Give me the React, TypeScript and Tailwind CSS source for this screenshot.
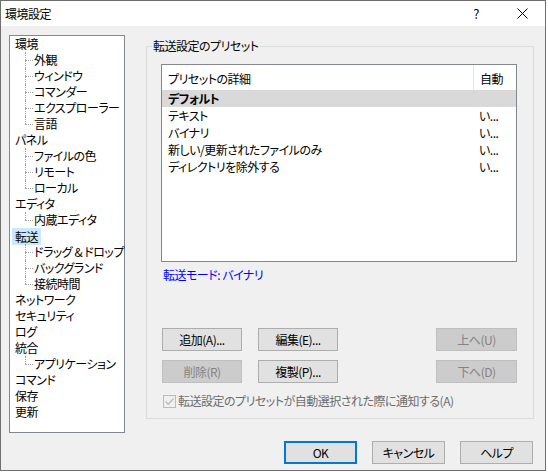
import React from "react"

type Node = { label: string; children?: string[]; selected?: boolean }

const tree: Node[] = [
  { label: "環境", children: ["外観", "ウィンドウ", "コマンダー", "エクスプローラー", "言語"] },
  { label: "パネル", children: ["ファイルの色", "リモート", "ローカル"] },
  { label: "エディタ", children: ["内蔵エディタ"] },
  { label: "転送", selected: true, children: ["ドラッグ & ドロップ", "バックグランド", "接続時間"] },
  { label: "ネットワーク" },
  { label: "セキュリティ" },
  { label: "ログ" },
  { label: "統合", children: ["アプリケーション"] },
  { label: "コマンド" },
  { label: "保存" },
  { label: "更新" },
]

const presets = [
  { name: "デフォルト", auto: "", selected: true },
  { name: "テキスト", auto: "い..." },
  { name: "バイナリ", auto: "い..." },
  { name: "新しい/更新されたファイルのみ", auto: "い..." },
  { name: "ディレクトリを除外する", auto: "い..." },
]

function TreeChild({ label, last }: { label: string; last: boolean }) {
  return (
    <div className="flex h-[16px] items-center pl-[10px]">
      <span className="relative h-[16px] w-[8px] shrink-0">
        <span
          className={`absolute left-0 top-0 border-l border-dotted border-[#a0a0a0] ${last ? "h-[8px]" : "h-[16px]"}`}
        />
        <span className="absolute left-0 top-[8px] w-[8px] border-t border-dotted border-[#a0a0a0]" />
      </span>
      <span className="ml-[1px] whitespace-nowrap">{label}</span>
    </div>
  )
}

function Btn({
  children,
  disabled,
  w = "w-[80px]",
  primary,
}: {
  children: React.ReactNode
  disabled?: boolean
  w?: string
  primary?: boolean
}) {
  const look = disabled
    ? "bg-[#cccccc] border border-[#bfbfbf] text-[#838383]"
    : primary
      ? "bg-[#e1e1e1] border-2 border-[#0078d7] text-black"
      : "bg-[#e1e1e1] border border-[#adadad] text-black"
  return (
    <div className={`${w} h-[23px] flex items-center justify-center whitespace-nowrap ${look}`}>
      {children}
    </div>
  )
}

export default function App() {
  return (
    <div className="w-[548px] h-[472px] bg-white text-[12px] leading-[16px] tracking-[-0.5px] text-black font-['Noto_Sans_CJK_JP','Noto_Sans',sans-serif] [font-feature-settings:'palt']">
      <div className="w-[546px] h-[471px] border border-[#6f6f6f] flex flex-col bg-[#f0f0f0]">
        {/* title bar */}
        <div className="h-[25px] bg-white flex items-center shrink-0">
          <span className="ml-[4px]">環境設定</span>
          <div className="ml-auto flex h-full">
            <div className="w-[46px] h-full flex items-center justify-center text-[13px]">?</div>
            <div className="w-[46px] h-full flex items-center justify-center">
              <svg width="11" height="11" viewBox="0 0 11 11">
                <path d="M0.5 0.5 L10.5 10.5 M10.5 0.5 L0.5 10.5" stroke="#000" strokeWidth="1" fill="none" />
              </svg>
            </div>
          </div>
        </div>

        <div className="flex pl-[8px] pt-[9px]">
          {/* tree */}
          <div className="w-[116px] h-[398px] border border-[#828790] bg-white pl-[5px] shrink-0">
            {tree.map((n) => (
              <div key={n.label}>
                <div className="flex h-[16px] items-center">
                  <span className={n.selected ? "-ml-[3px] px-[3px] bg-[#cce8ff] leading-[17px]" : ""}>
                    {n.label}
                  </span>
                </div>
                {n.children?.map((c, i) => (
                  <TreeChild key={c} label={c} last={i === n.children!.length - 1} />
                ))}
              </div>
            ))}
          </div>

          {/* group box */}
          <div className="relative ml-[21px] mt-[11px] w-[388px] h-[373px] border border-[#dcdcdc] pl-[14px] pt-[17px]">
            <span className="absolute -top-[9px] left-[5px] px-[1px] bg-[#f0f0f0]">転送設定のプリセット</span>

            <div className="w-[356px] h-[198px] border border-[#828790] bg-white">
              <div className="flex h-[25px]">
                <div className="w-[311px] pl-[6px] pt-[6px] whitespace-nowrap">プリセットの詳細</div>
                <div className="border-l border-[#e5e5e5] pl-[6px] pt-[6px]">自動</div>
              </div>
              {presets.map((p) => (
                <div
                  key={p.name}
                  className={`flex h-[17px] items-center ${p.selected ? "bg-[#d9d9d9] font-bold" : ""}`}
                >
                  <div className="w-[311px] pl-[6px] whitespace-nowrap">{p.name}</div>
                  <div className="pl-[6px] font-normal">{p.auto}</div>
                </div>
              ))}
            </div>

            <div className="mt-[5px] ml-[2px] text-[#0000ff]">転送モード: バイナリ</div>

            <div className="w-[356px] mt-[45px] pl-[1px] flex">
              <Btn>追加(A)...</Btn>
              <div className="ml-[16px]">
                <Btn>編集(E)...</Btn>
              </div>
              <div className="ml-auto">
                <Btn disabled w="w-[81px]">上へ(U)</Btn>
              </div>
            </div>
            <div className="w-[356px] mt-[9px] pl-[1px] flex">
              <Btn disabled>削除(R)</Btn>
              <div className="ml-[16px]">
                <Btn>複製(P)...</Btn>
              </div>
              <div className="ml-auto">
                <Btn disabled w="w-[81px]">下へ(D)</Btn>
              </div>
            </div>

            <div className="mt-[10px] ml-[2px] flex items-center">
              <span className="w-[13px] h-[13px] border border-[#bcbcbc] bg-[#f0f0f0] flex items-center justify-center">
                <svg width="11" height="11" viewBox="0 0 11 11">
                  <path d="M1.5 5.5 L4.2 8.2 L9.5 2.5" stroke="#bcbcbc" strokeWidth="1.4" fill="none" />
                </svg>
              </span>
              <span className="ml-[2px] text-[#6d6d6d] whitespace-nowrap">
                転送設定のプリセットが自動選択された際に通知する(A)
              </span>
            </div>
          </div>
        </div>

        {/* bottom buttons */}
        <div className="mt-[8px] flex justify-end gap-[15px] pr-[12px]">
          <Btn primary w="w-[73px]">OK</Btn>
          <Btn w="w-[73px]">キャンセル</Btn>
          <Btn w="w-[73px]">ヘルプ</Btn>
        </div>
      </div>
    </div>
  )
}
